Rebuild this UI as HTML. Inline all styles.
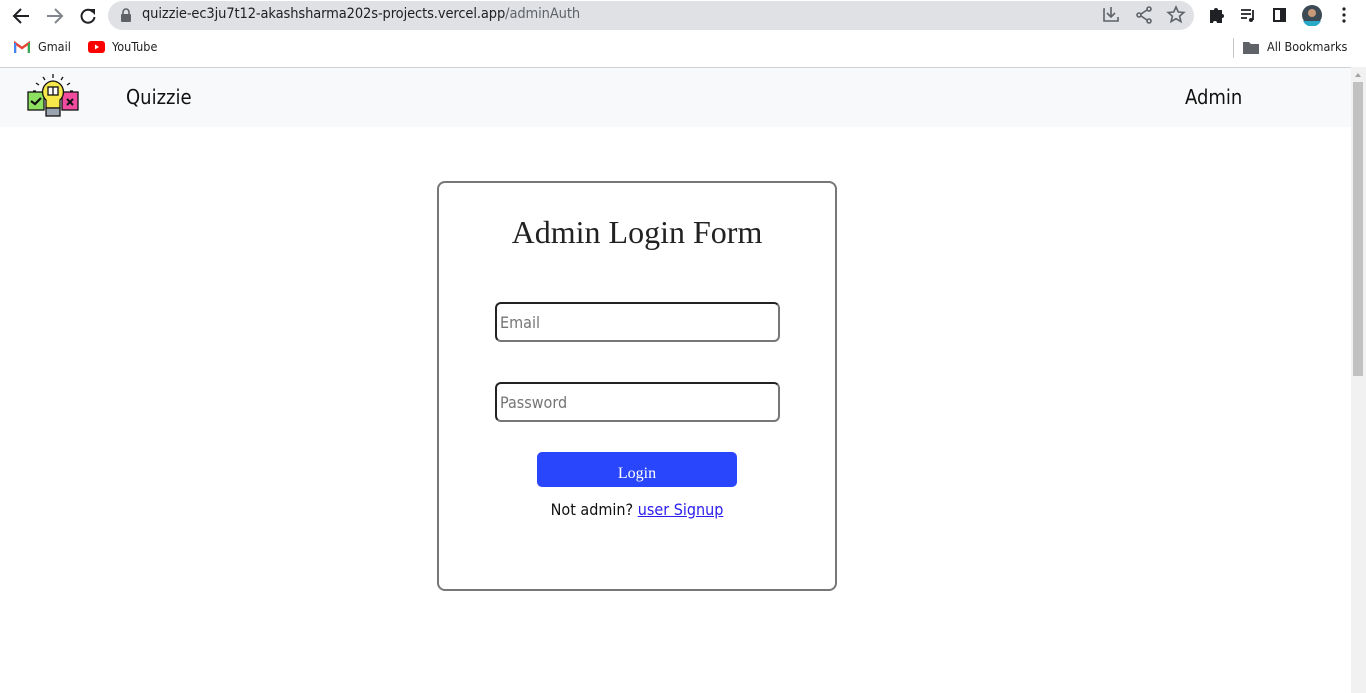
<!DOCTYPE html>
<html><head><style>
*{margin:0;padding:0;box-sizing:border-box}
body{width:1366px;height:693px;overflow:hidden;background:#fff;font-family:"Liberation Sans",sans-serif;position:relative}
.a{position:absolute}
.top{left:0;top:0;width:1366px;height:32px;background:#fff}
.url{left:108px;top:1px;width:1086px;height:29px;border-radius:15px;background:#dfe1e5}
.urltxt{left:142px;top:6px;font-size:14.5px;color:#202124;font-family:"DejaVu Sans Condensed","Liberation Sans",sans-serif;letter-spacing:-0.1px}
.bm{top:39px;font-size:12.5px;color:#202124;font-family:"DejaVu Sans Condensed","Liberation Sans",sans-serif}
.nav{left:0;top:67px;width:1351px;height:60px;background:#f8f9fa;border-top:1px solid #d0d0d0}
.sb{left:1351px;top:67px;width:15px;height:626px;background:#f1f1f1}
.card{left:437px;top:181px;width:400px;height:410px;border:2px solid #777;border-radius:8px}
.inp{left:495px;width:285px;height:40px;border:2px solid;border-color:#222 #777 #777 #222;border-radius:6px;font-size:16px;color:#757575;padding:9px 0 0 3px;font-family:"DejaVu Sans Condensed","Liberation Sans",sans-serif}
</style></head><body>
<div class="a top"></div>
<svg class="a" style="left:10px;top:5px" width="100" height="22" viewBox="0 0 100 22">
<path d="M19 11H5M11 4l-7 7 7 7" stroke="#202124" stroke-width="2" fill="none"/>
<path d="M37 11h14M45 4l7 7-7 7" stroke="#80868b" stroke-width="2" fill="none"/>
<path d="M83 7a6.5 6.5 0 1 0 1.5 5" stroke="#202124" stroke-width="2" fill="none"/><path d="M79 4h6v6z" fill="#202124"/>
</svg>
<div class="a url"></div>
<svg class="a" style="left:120px;top:8px" width="12" height="14"><rect x="1" y="6" width="10" height="8" rx="1" fill="#5f6368"/><path d="M3 6V4a3 3 0 0 1 6 0v2" stroke="#5f6368" stroke-width="1.6" fill="none"/></svg>
<div class="a urltxt">quizzie-ec3ju7t12-akashsharma202s-projects.vercel.app<span style="color:#5f6368">/adminAuth</span></div>
<svg class="a" style="left:1100px;top:4px" width="260" height="22" viewBox="0 0 260 22">
<g stroke="#5f6368" stroke-width="1.6" fill="none"><path d="M5 5h-1v12h14V13M11 3v9M7 9l4 4 4-4"/><circle cx="49" cy="5" r="2"/><circle cx="49" cy="17" r="2"/><circle cx="39" cy="11" r="2"/><path d="M47 6l-6 4M47 16l-6-4"/><path d="M76 3l2.3 5 5.5.5-4.2 3.7 1.3 5.4-4.9-2.9-4.9 2.9 1.3-5.4-4.2-3.7 5.5-.5z"/></g>
<path d="M110 6h4a2 2 0 0 1 4 0h4v4a2 2 0 0 1 0 4v5h-5a2 2 0 0 0-4 0h-3z" fill="#202124"/>
<path d="M141 6h10M141 10h10M141 14h6M153 6v10" stroke="#202124" stroke-width="1.8"/><circle cx="151" cy="16" r="2" fill="#202124"/>
<rect x="174" y="5" width="11" height="12" stroke="#202124" stroke-width="2" fill="none"/><rect x="180" y="5" width="5" height="12" fill="#202124"/>
<circle cx="212" cy="11" r="10" fill="#3c4a55"/><circle cx="212" cy="9" r="4" fill="#c89a7a"/><path d="M203 17a10 10 0 0 0 18 0" fill="#2aa8c8"/>
<circle cx="244" cy="5" r="1.6" fill="#202124"/><circle cx="244" cy="11" r="1.6" fill="#202124"/><circle cx="244" cy="17" r="1.6" fill="#202124"/>
</svg>
<svg class="a" style="left:14px;top:41px" width="16" height="12"><path d="M1 12V2l7 5 7-5v10" stroke="#ea4335" stroke-width="2.4" fill="none"/><path d="M1 12V2" stroke="#4285f4" stroke-width="2.4"/><path d="M15 12V2" stroke="#34a853" stroke-width="2.4"/></svg>
<div class="a bm" style="left:38px">Gmail</div>
<svg class="a" style="left:88px;top:41px" width="17" height="12"><rect width="17" height="12" rx="3" fill="#f00"/><path d="M7 3.5l4 2.5-4 2.5z" fill="#fff"/></svg>
<div class="a bm" style="left:112px">YouTube</div>
<div class="a" style="left:1233px;top:38px;width:1px;height:20px;background:#c4c4c4"></div>
<svg class="a" style="left:1243px;top:41px" width="16" height="13"><path d="M0 1h6l2 2h8v10H0z" fill="#5f6368"/></svg>
<div class="a bm" style="left:1267px">All Bookmarks</div>
<div class="a nav"></div>
<svg class="a" style="left:26px;top:72px" width="54" height="50" viewBox="0 0 54 50">
<g stroke="#111" stroke-width="1.3"><path d="M27 2v4M17 5l2 3M37 5l-2 3M10 11l3 2M44 11l-3 2M7 19h3M47 19h-3"/>
<rect x="2" y="20" width="16" height="18" fill="#8ee060"/><rect x="36" y="20" width="16" height="18" fill="#f14ba0"/>
<path d="M27 9a11 11 0 0 0-7 19v8h14v-8a11 11 0 0 0-7-19z" fill="#f6e84a"/><rect x="20" y="36" width="14" height="8" fill="#9aa3b0"/><rect x="22" y="15" width="10" height="8" fill="#fff"/><path d="M27 15v8"/>
<path d="M5 29l4 3 6-6" stroke-width="2.2" fill="none"/><path d="M41 27l6 6M47 27l-6 6" stroke-width="2" /></g>
</svg>
<div class="a" style="left:126px;top:85px;font-size:20px;color:#111;font-family:'DejaVu Sans Condensed','Liberation Sans',sans-serif">Quizzie</div>
<div class="a" style="left:1185px;top:85px;font-size:20px;color:#111;font-family:'DejaVu Sans Condensed','Liberation Sans',sans-serif">Admin</div>
<div class="a sb"><div style="position:absolute;left:2px;top:15px;width:10px;height:294px;background:#c1c1c1"></div><div style="position:absolute;left:4px;top:6px;border:3px solid transparent;border-bottom:4px solid #a3a3a3;border-top:0"></div></div>
<div class="a card"></div>
<div class="a" style="left:438px;width:398px;top:214px;text-align:center;font-family:'Liberation Serif',serif;font-size:32px;color:#222">Admin Login Form</div>
<div class="a inp" style="top:302px">Email</div>
<div class="a inp" style="top:382px">Password</div>
<div class="a" style="left:537px;top:452px;width:200px;height:35px;background:#2a46fc;border-radius:5px;color:#fff;text-align:center;font-family:'Liberation Serif',serif;font-size:16px;line-height:44px">Login</div>
<div class="a" style="left:438px;width:398px;top:500px;text-align:center;font-size:16px;color:#111;font-family:'DejaVu Sans Condensed','Liberation Sans',sans-serif">Not admin? <span style="color:#2a1dee;text-decoration:underline">user Signup</span></div>
</body></html>
